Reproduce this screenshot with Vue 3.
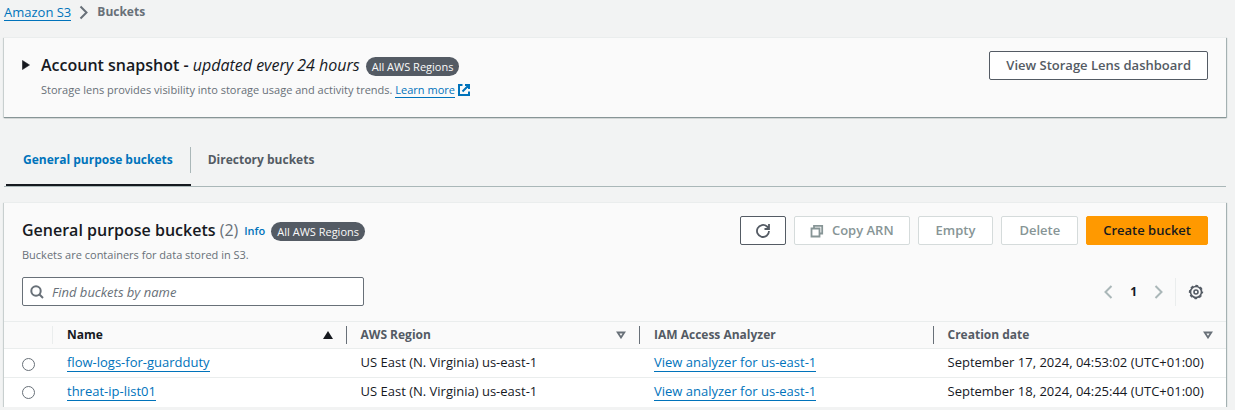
<script setup>
import { ref } from 'vue'

const search = ref('')
const selected = ref('')
const actions = ['Empty', 'Delete']
const buckets = [
  { name: 'flow-logs-for-guardduty', region: 'US East (N. Virginia) us-east-1', analyzer: 'View analyzer for us-east-1', created: 'September 17, 2024, 04:53:02 (UTC+01:00)' },
  { name: 'threat-ip-list01', region: 'US East (N. Virginia) us-east-1', analyzer: 'View analyzer for us-east-1', created: 'September 18, 2024, 04:25:44 (UTC+01:00)' },
]
</script>

<template>
  <main class="page">
    <nav class="crumbs" aria-label="Breadcrumb">
      <a href="#" class="link">Amazon S3</a>
      <svg width="10" height="16" viewBox="0 0 10 16" aria-hidden="true"><path d="M1.500 2.500l6 6-6 6" fill="none" stroke="#687078" stroke-width="2" /></svg>
      <span class="current">Buckets</span>
    </nav>

    <section class="panel snapshot">
      <button class="toggle" aria-label="Expand account snapshot">
        <svg width="8" height="10" viewBox="0 0 8 10"><path d="M0.500 0.500L7.500 5L0.500 9.500Z" fill="#16191f" stroke="#16191f" stroke-width="0.600" /></svg>
      </button>
      <div class="grow">
        <div class="title-row">
          <h2>Account snapshot - <em>updated every 24 hours</em></h2>
          <span class="badge">All AWS Regions</span>
        </div>
        <p class="note">
          Storage lens provides visibility into storage usage and activity trends.
          <a href="#" class="external"><span class="link">Learn more</span><svg width="14" height="14" viewBox="0 0 14 14" aria-hidden="true"><path d="M5.500 2H2v10h10V8.500M8 2h4V6M12 2L5.500 8.500" fill="none" stroke="#0073bb" stroke-width="2" /></svg></a>
        </p>
      </div>
      <button class="btn">View Storage Lens dashboard</button>
    </section>

    <div class="tabs" role="tablist">
      <button class="tab active" role="tab" aria-selected="true"><span>General purpose buckets</span></button>
      <button class="tab" role="tab" aria-selected="false"><span>Directory buckets</span></button>
    </div>

    <section class="panel">
      <header class="head">
        <div class="grow">
          <div class="title-row">
            <h2>General purpose buckets <span class="count">(2)</span></h2>
            <a href="#" class="info">Info</a>
            <span class="badge">All AWS Regions</span>
          </div>
          <p class="note">Buckets are containers for data stored in S3.</p>
        </div>
        <div class="actions">
          <button class="btn icon-btn" aria-label="Refresh">
            <svg width="16" height="16" viewBox="0 0 16 16"><path d="M14 8a6 6 0 1 1-2-4.500L13.500 5M14 1v5H9.500" fill="none" stroke="#545b64" stroke-width="1.800" /></svg>
          </button>
          <button class="btn copy" disabled>
            <svg width="14" height="14" viewBox="0 0 14 14" aria-hidden="true"><path d="M4 4V1.800h8.200v7.700H10M1.500 4.500H9.500V12.500H1.500Z" fill="none" stroke="#879596" stroke-width="1.800" /></svg>
            Copy ARN
          </button>
          <button v-for="a in actions" :key="a" class="btn wide" disabled>{{ a }}</button>
          <button class="btn primary">Create bucket</button>
        </div>
      </header>

      <div class="tools">
        <label class="search">
          <svg width="14" height="14" viewBox="0 0 14 14" aria-hidden="true"><circle cx="6" cy="6" r="4.700" fill="none" stroke="#687078" stroke-width="2" /><path d="M9.500 9.500L13 13" stroke="#687078" stroke-width="2" /></svg>
          <input v-model="search" type="text" placeholder="Find buckets by name" aria-label="Find buckets by name" />
        </label>
        <div class="pager">
          <button class="plain" aria-label="Previous page"><svg width="10" height="16" viewBox="0 0 10 16"><path d="M8.500 2L2.500 8l6 6" fill="none" stroke="#aab7b8" stroke-width="2" /></svg></button>
          <button class="plain number">1</button>
          <button class="plain" aria-label="Next page"><svg width="10" height="16" viewBox="0 0 10 16"><path d="M1.500 2l6 6-6 6" fill="none" stroke="#aab7b8" stroke-width="2" /></svg></button>
          <button class="plain settings" aria-label="Preferences">
            <svg width="16" height="16" viewBox="0 0 16 16"><circle cx="8" cy="8" r="5.500" fill="none" stroke="#545b64" stroke-width="1.600" /><circle cx="8" cy="8" r="6.500" fill="none" stroke="#545b64" stroke-width="1.300" stroke-dasharray="2.900 2.205" stroke-dashoffset="1.450" /><circle cx="8" cy="8" r="2" fill="none" stroke="#545b64" stroke-width="1.600" /></svg>
          </button>
        </div>
      </div>

      <table>
        <colgroup><col class="pick" /><col /><col /><col /><col /></colgroup>
        <thead>
          <tr>
            <th aria-label="Selection"></th>
            <th class="sorted light"><div class="th">Name<svg width="10" height="8" viewBox="0 0 10 8"><path d="M5 0L10 8H0Z" fill="#16191f" /></svg></div></th>
            <th><div class="th">AWS Region<svg width="10" height="8" viewBox="0 0 10 8"><path d="M1.700 1.500h6.600L5 6.500Z" fill="none" stroke="#687078" stroke-width="1.800" /></svg></div></th>
            <th><div class="th">IAM Access Analyzer</div></th>
            <th><div class="th">Creation date<svg width="10" height="8" viewBox="0 0 10 8"><path d="M1.700 1.500h6.600L5 6.500Z" fill="none" stroke="#687078" stroke-width="1.800" /></svg></div></th>
          </tr>
        </thead>
        <tbody>
          <tr v-for="b in buckets" :key="b.name">
            <td class="radio-cell"><input v-model="selected" type="radio" name="bucket" :value="b.name" :aria-label="b.name" /></td>
            <td><a href="#" class="link">{{ b.name }}</a></td>
            <td>{{ b.region }}</td>
            <td><a href="#" class="link">{{ b.analyzer }}</a></td>
            <td>{{ b.created }}</td>
          </tr>
        </tbody>
      </table>
    </section>
  </main>
</template>

<style>
body {
  background: #f2f3f3;
}
</style>

<style scoped>
.page {
  padding: 2px 9px 0 4px;
  font: 13px/20px "Open Sans", "Noto Sans", sans-serif;
  color: #16191f;
}
button,
input {
  font: inherit;
  margin: 0;
}
svg {
  display: block;
  flex: none;
}
h2,
p {
  margin: 0;
}
.grow {
  flex: 1;
}
.link {
  color: #0073bb;
  text-decoration: none;
  border-bottom: 1px solid #0073bb;
}
.crumbs {
  display: flex;
  align-items: center;
  gap: 8px;
  height: 20px;
  line-height: 16px;
}
.current {
  color: #687078;
  font-size: 12px;
  font-weight: 700;
}
.panel {
  background: #fafafa;
  border-top: 1px solid #eaeded;
  box-shadow: 0 1px 1px #879596, 1px 1px 1px #aab7b8, -1px 1px 1px #d5dbdb;
}
.snapshot {
  display: flex;
  align-items: flex-start;
  margin-top: 15px;
  padding: 13px 18px 17px;
}
.toggle {
  width: 19px;
  padding: 9px 0 0;
  border: 0;
  background: none;
}
.title-row {
  display: flex;
  align-items: center;
  gap: 6px;
}
h2 {
  font-size: 16px;
  line-height: 28px;
  font-weight: 600;
}
h2 em,
.count {
  font-weight: 400;
}
.count {
  color: #687078;
}
.badge {
  margin-top: 2px;
  padding: 0 6px;
  border-radius: 10px;
  background: #545b64;
  color: #fafafa;
  font-size: 11px;
  line-height: 19px;
}
.note {
  padding-top: 1px;
  font-size: 11px;
  line-height: 20px;
  color: #687078;
}
.external {
  text-decoration: none;
}
.external svg {
  display: inline-block;
  vertical-align: -3px;
  margin-left: 2px;
}
.btn {
  box-sizing: border-box;
  height: 29px;
  padding: 0 16px;
  border: 1px solid #545b64;
  border-radius: 2px;
  background: #fff;
  color: #545b64;
  font-weight: 600;
  line-height: 25px;
  white-space: nowrap;
}
.btn:disabled {
  border-color: #d5dbdb;
  color: #879596;
}
.btn.primary {
  border-color: #ff9900;
  background: #ff9900;
  color: #16191f;
}
.btn.icon-btn {
  padding: 0 14px;
}
.btn.wide {
  padding: 0 17px;
}
.btn.copy {
  display: flex;
  align-items: center;
  gap: 8px;
  padding: 0 15px;
}
.tabs {
  display: flex;
  margin: 23px 0 15px;
  padding: 7px 0 0 2px;
  border-bottom: 1px solid #aab7b8;
}
.tab {
  padding: 0;
  border: 0;
  border-bottom: 2px solid transparent;
  background: none;
  color: #545b64;
  font-size: 12px;
  font-weight: 700;
}
.tab span {
  display: block;
  margin-bottom: 11px;
  padding: 3px 17px;
}
.tab.active {
  border-bottom-color: #16191f;
  color: #0073bb;
}
.tab.active span {
  border-right: 1px solid #aab7b8;
}
.head {
  display: flex;
  align-items: flex-start;
  padding: 13px 18px 0;
}
.info {
  margin-top: 2px;
  color: #0073bb;
  font-size: 11px;
  font-weight: 600;
  text-decoration: none;
}
.actions {
  display: flex;
  gap: 8px;
}
.tools {
  display: flex;
  align-items: center;
  justify-content: space-between;
  padding: 12px 18px 15px;
}
.search {
  box-sizing: border-box;
  display: flex;
  align-items: center;
  gap: 8px;
  width: 342px;
  height: 29px;
  padding: 0 7px;
  border: 1px solid #687078;
  border-radius: 2px;
  background: #fff;
}
.search input {
  flex: 1;
  min-width: 0;
  padding: 0;
  border: 0;
  outline: 0;
  background: none;
}
.search input::placeholder {
  color: #687078;
  font-style: italic;
  opacity: 1;
}
.pager {
  display: flex;
  align-items: center;
}
.plain {
  padding: 0;
  border: 0;
  background: none;
}
.number {
  padding: 0 17px;
  color: #16191f;
  font-size: 12px;
  font-weight: 700;
}
.settings {
  margin-left: 11px;
  padding: 6px 4px 6px 12px;
  border-left: 1px solid #eaeded;
}
table {
  width: 100%;
  table-layout: fixed;
  border-collapse: collapse;
  border-top: 1px solid #eaeded;
}
.pick {
  width: 48px;
}
th {
  padding: 4px 0;
  text-align: left;
  white-space: nowrap;
  color: #545b64;
  font-size: 12px;
  font-weight: 700;
}
.th {
  display: flex;
  align-items: center;
  justify-content: space-between;
  padding: 0 13px 0 14px;
  line-height: 18px;
  border-left: 1px solid #687078;
}
.light .th {
  border-left-color: #eaeded;
}
.sorted {
  color: #16191f;
}
td {
  padding: 3px 14px 5px 15px;
  white-space: nowrap;
  background: #fff;
  border-top: 1px solid #eaeded;
}
tr:last-child td {
  padding-bottom: 6px;
}
td .link {
  display: inline-block;
  line-height: 17px;
}
td.radio-cell {
  padding: 5px 18px 3px;
}
input[type="radio"] {
  appearance: none;
  display: block;
  box-sizing: border-box;
  width: 13px;
  height: 13px;
  border: 1px solid #687078;
  border-radius: 50%;
  background: #fff;
}
input[type="radio"]:checked {
  border: 4px solid #0073bb;
}
</style>
